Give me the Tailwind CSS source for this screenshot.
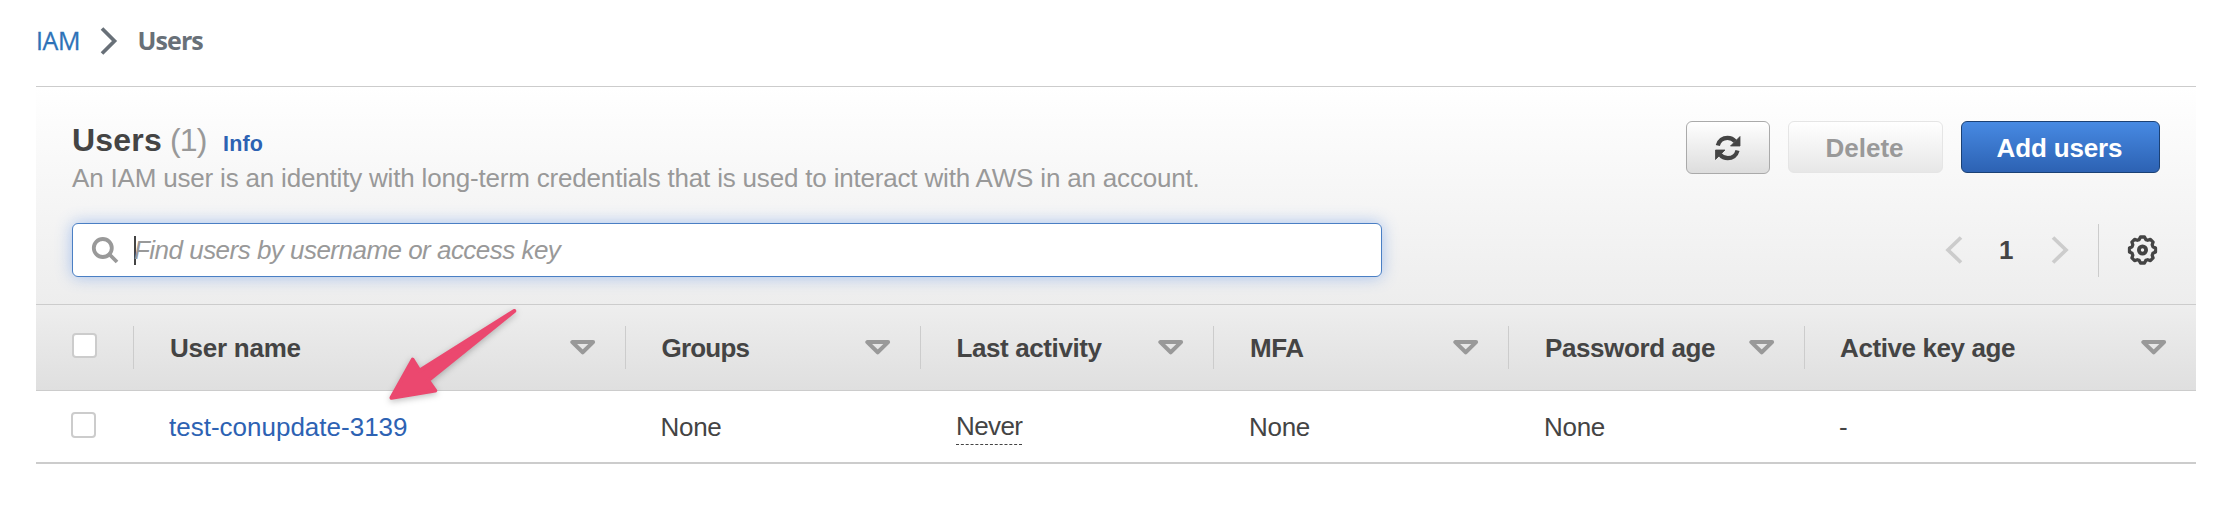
<!DOCTYPE html>
<html lang="en">
<head>
<meta charset="utf-8">
<title>IAM Users</title>
<script src="https://cdn.jsdelivr.net/npm/@tailwindcss/browser@4"></script>
</head>
<body class="h-[506px] w-[2238px] overflow-hidden bg-white font-['Liberation_Sans',Arial,sans-serif] text-[26px] text-[#444]">
<svg class="hidden">
  <symbol id="sort" viewBox="0 0 26 15"><path d="M2.300 2.100h20.800L12.700 12.300z" fill="none" stroke="#999" stroke-width="4" stroke-linejoin="round"/></symbol>
</svg>
<div class="relative h-full pl-9 pr-[42px]">
  <nav class="flex h-[86px] items-center pb-1 font-['Open_Sans',sans-serif] text-[25px] leading-none">
    <a class="w-[46px] whitespace-nowrap pb-px tracking-[-0.4px] text-[#2d72b8] [-webkit-text-stroke:0.3px_#2d72b8]">IAM</a>
    <svg class="ml-[18px] h-7 w-[18px]" viewBox="0 0 18 28"><path d="M2 1.500 14.500 14 2 26.500" fill="none" stroke="#687078" stroke-width="3.700"/></svg>
    <span class="ml-[19.500px] pb-px font-bold tracking-[-0.9px] text-[#687078]">Users</span>
  </nav>
  <main class="border-t border-[#ccc]">
    <section class="h-[217px] bg-linear-to-b from-white to-[#ededed] px-9 pt-[34px]">
      <div class="flex h-[76px] justify-between">
        <div>
          <h1 class="flex h-[38px] items-baseline whitespace-nowrap text-[32px] leading-[38px]"><b class="w-[98px] tracking-[0.2px]">Users</b><span class="w-[53px] tracking-[-0.8px] text-[#999]">(1)</span><a class="text-[21.500px] font-bold tracking-[0.2px] text-[#2d62b3]">Info</a></h1>
          <p class="whitespace-nowrap leading-[38px] tracking-[-0.185px] text-[#999]">An IAM user is an identity with long-term credentials that is used to interact with AWS in an account.</p>
        </div>
        <div class="flex items-start gap-[18px] font-bold">
          <button class="flex h-[53px] w-[84px] items-center justify-center rounded-[6px] border border-[#aaa] bg-linear-to-b from-white to-[#ddd]" aria-label="Refresh">
            <svg width="26" height="26" viewBox="0 0 26 26"><path d="M2.800 10.500C4 5.500 8 2.800 12.500 2.800c3.300 0 5.800 1.300 7.700 3.600M22.500 15.500C21.300 20.500 17.300 23.200 12.800 23.200c-3.300 0-5.800-1.300-7.700-3.600" fill="none" stroke="#444" stroke-width="4.200"/><path d="M25 1.500v9.500h-9.500zM.5 24.500V15H10z" fill="#444" stroke="#444" stroke-width=".8" stroke-linejoin="round"/></svg>
          </button>
          <button class="h-[52px] w-[155px] rounded-[6px] border border-[#e5e5e5] bg-linear-to-b from-white to-[#e7e7e7] pr-0.5 pt-0.5 text-[#999]">Delete</button>
          <button class="h-[52px] w-[199px] rounded-[6px] border border-[#1b4175] bg-linear-to-b from-[#478ae3] to-[#2d62b3] pr-0.5 pt-0.5 tracking-[-0.15px] text-white">Add users</button>
        </div>
      </div>
      <div class="mt-[26px] flex h-[54px] items-center">
        <div class="flex h-[54px] w-[1310px] items-center rounded-[6px] border border-[#4a7fc4] bg-white pl-[18px] shadow-[0_0_16px_rgba(70,130,230,0.45)]">
          <svg width="28" height="28" viewBox="0 0 28 28" fill="none" stroke="#999" stroke-width="3.800"><circle cx="11.800" cy="12" r="9"/><path d="m18 18 8 8"/></svg>
          <span class="ml-[15px] h-[29px] w-0.5 bg-[#444]"></span>
          <span class="-ml-0.5 whitespace-nowrap italic tracking-[-0.52px] text-[#999]">Find users by username or access key</span>
        </div>
        <div class="-mr-px ml-auto flex h-[54px] items-center pr-[3px]">
          <svg width="18" height="28" viewBox="0 0 18 28"><path d="M16 1.500 3 14l13 12.500" fill="none" stroke="#ccc" stroke-width="3.700"/></svg>
          <b class="ml-[36px] w-[14px]">1</b>
          <svg class="ml-[38px]" width="18" height="28" viewBox="0 0 18 28"><path d="M2 1.500 15 14 2 26.500" fill="none" stroke="#ccc" stroke-width="3.700"/></svg>
          <span class="ml-[29px] h-[53px] w-px bg-[#ccc]"></span>
          <svg class="ml-[28px]" width="31" height="30" viewBox="-15.500 -15 31 30" fill="none" stroke="#444" stroke-width="3.300" stroke-linejoin="round"><circle r="3.600" stroke-width="3.800"/><path d="M-2-13h4l1.300 2.600 1.900.7 2.700-.9 2.700 2.700-.9 2.700.7 1.900 2.600 1.300v4l-2.600 1.300-.7 1.900.9 2.700-2.700 2.700-2.700-.9-1.900.7L2 13h-4l-1.300-2.600-1.900-.7-2.700.9-2.700-2.700.9-2.700-.7-1.900L-13 2v-4l2.600-1.300.7-1.900-.9-2.700 2.700-2.700 2.700.9 1.900-.7z"/></svg>
        </div>
      </div>
    </section>
    <div class="grid h-[87px] grid-cols-[98px_492px_295px_293px_295px_296px_1fr] items-center border-y border-[#ccc] bg-linear-to-b from-[#eee] to-[#dfdfdf] font-bold tracking-[-0.4px]">
      <div class="flex h-[43px] items-center border-r border-[#ccc] pb-1 pl-9"><span class="h-[25px] w-[25px] rounded-[4px] border-2 border-[#ccc] bg-white"></span></div>
      <div class="flex h-[43px] items-center justify-between border-r border-[#ccc] pl-[36px] pr-[29px]"><span class="pt-0.5 tracking-[-0.25px]">User name</span><svg width="26" height="15"><use href="#sort"/></svg></div>
      <div class="flex h-[43px] items-center justify-between border-r border-[#ccc] pl-[35.500px] pr-[29px]"><span class="pt-0.5 tracking-[-0.8px]">Groups</span><svg width="26" height="15"><use href="#sort"/></svg></div>
      <div class="flex h-[43px] items-center justify-between border-r border-[#ccc] pl-[35.500px] pr-[29px]"><span class="pt-0.5">Last activity</span><svg width="26" height="15"><use href="#sort"/></svg></div>
      <div class="flex h-[43px] items-center justify-between border-r border-[#ccc] pl-[36px] pr-[29px]"><span class="pt-0.5">MFA</span><svg width="26" height="15"><use href="#sort"/></svg></div>
      <div class="flex h-[43px] items-center justify-between border-r border-[#ccc] pl-[36px] pr-[29px]"><span class="pt-0.5">Password age</span><svg width="26" height="15"><use href="#sort"/></svg></div>
      <div class="flex h-[43px] items-center justify-between pl-[35px] pr-[29px]"><span class="pt-0.5">Active key age</span><svg width="26" height="15"><use href="#sort"/></svg></div>
    </div>
    <div class="grid h-[73px] grid-cols-[98px_492px_295px_293px_295px_296px_1fr] items-center border-b-2 border-[#ccc] pt-px">
      <div class="pb-[5px] pl-[35px]"><span class="block h-[26px] w-[25px] rounded-[4px] border-2 border-[#ccc] bg-white"></span></div>
      <a class="pl-[35px] text-[#2d62b3]">test-conupdate-3139</a>
      <span class="pl-[34.500px] tracking-[-0.3px]">None</span>
      <span class="flex pl-[35px]"><span class="h-[35px] border-b border-dashed border-[#444] leading-[33px] tracking-[-0.6px]">Never</span></span>
      <span class="pl-[35px] tracking-[-0.3px]">None</span>
      <span class="pl-[35px] tracking-[-0.3px]">None</span>
      <span class="pl-[34px]">-</span>
    </div>
  </main>
  <svg class="absolute left-[380px] top-[300px] drop-shadow-[0_2px_3px_rgba(0,0,0,0.25)]" width="146" height="110" viewBox="380 300 146 110"><path d="M391.500 397.800 412.700 359.700 419.500 370.800 514.300 311 428 380.500 435.200 390.600z" fill="#eb486f" stroke="#eb486f" stroke-width="4" stroke-linejoin="round"/></svg>
</div>
</body>
</html>
